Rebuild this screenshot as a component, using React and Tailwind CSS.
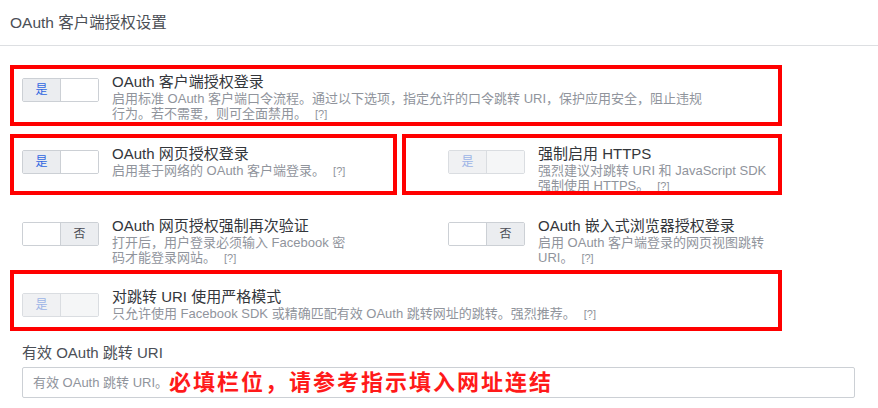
import React from 'react';

const font = { fontFamily: '"Liberation Sans", "Noto Sans CJK SC", sans-serif' };

const Toggle = ({ on, disabled }) => {
    if (on) {
        return (
            <div className={`flex w-[77px] h-[24px] shrink-0 mt-[5px] rounded-[2px] border overflow-hidden ${disabled ? 'border-[#dadde1]' : 'border-[#ccd0d5]'}`}>
                <div className={`w-[38px] flex items-center justify-center text-[12px] border-r ${disabled ? 'bg-[#f0f1f3] text-[#9cb4e6] border-[#dadde1]' : 'bg-[#ebedf0] text-[#2f66e0] border-[#ccd0d5]'}`}>
                    是
                </div>
                <div className={`flex-1 ${disabled ? 'bg-[#f5f6f7]' : 'bg-white'}`} />
            </div>
        );
    }
    return (
        <div className="flex w-[77px] h-[24px] shrink-0 mt-[5px] rounded-[2px] border border-[#ccd0d5] overflow-hidden">
            <div className="w-[38px] bg-white border-r border-[#ccd0d5]" />
            <div className="flex-1 bg-[#ebedf0] flex items-center justify-center text-[12px] text-[#4b4f56]">
                否
            </div>
        </div>
    );
};

const Help = () => <span className="ml-[8px] text-[11px] text-[#90949c]">[?]</span>;

const Option = ({ on, disabled, title, lines }) => (
    <div className="flex gap-[13px]">
        <Toggle on={on} disabled={disabled} />
        <div>
            <div className="text-[15px] leading-[18px] text-[#33363b] whitespace-nowrap">{title}</div>
            {lines.map((line, i) => (
                <div key={i} className="text-[13px] leading-[15px] text-[#90949c] whitespace-nowrap">
                    {line}
                    {i === lines.length - 1 && <Help />}
                </div>
            ))}
        </div>
    </div>
);

// red highlight frames drawn over the form
const Mark = ({ className }) => (
    <div className={`absolute border-[4px] border-[#ff0000] pointer-events-none ${className}`} />
);

export default function App() {
    return (
        <div className="relative w-[878px] h-[408px] bg-white overflow-hidden" style={font}>
            <div className="h-[46px] border-b border-[#dddfe2] px-[10px] flex items-center">
                <span className="text-[15.5px] text-[#4b4f56]">OAuth 客户端授权设置</span>
            </div>

            <div className="pl-[22px] pt-[27px]">
                <Option
                    on
                    title="OAuth 客户端授权登录"
                    lines={[
                        '启用标准 OAuth 客户端口令流程。通过以下选项，指定允许的口令跳转 URI，保护应用安全，阻止违规',
                        '行为。若不需要，则可全面禁用。',
                    ]}
                />

                <div className="grid grid-cols-[426px_1fr] mt-[23px]">
                    <Option on title="OAuth 网页授权登录" lines={['启用基于网络的 OAuth 客户端登录。']} />
                    <Option
                        on
                        disabled
                        title="强制启用 HTTPS"
                        lines={['强烈建议对跳转 URI 和 JavaScript SDK', '强制使用 HTTPS。']}
                    />
                </div>

                <div className="grid grid-cols-[426px_1fr] mt-[23px]">
                    <Option
                        title="OAuth 网页授权强制再次验证"
                        lines={['打开后，用户登录必须输入 Facebook 密', '码才能登录网站。']}
                    />
                    <Option
                        title="OAuth 嵌入式浏览器授权登录"
                        lines={['启用 OAuth 客户端登录的网页视图跳转', 'URI。']}
                    />
                </div>

                <div className="mt-[22px]">
                    <Option
                        on
                        disabled
                        title="对跳转 URI 使用严格模式"
                        lines={['只允许使用 Facebook SDK 或精确匹配有效 OAuth 跳转网址的跳转。强烈推荐。']}
                    />
                </div>

                <div className="mt-[22px] text-[15px] leading-[18px] text-[#4b4f56]">有效 OAuth 跳转 URI</div>
                <div className="mt-[5px] w-[833px] h-[31px] border border-[#ccd0d5] rounded-[2px] flex items-center px-[10px]">
                    <span className="text-[13px] text-[#90949c]">有效 OAuth 跳转 URI。</span>
                    <span className="ml-[1px] text-[22px] leading-[26px] font-bold text-[#ff1a1a] tracking-[2px]">
                        必填栏位，请参考指示填入网址连结
                    </span>
                </div>
            </div>

            <Mark className="left-[10px] top-[65px] w-[772px] h-[61px]" />
            <Mark className="left-[10px] top-[134px] w-[387px] h-[61px]" />
            <Mark className="left-[402px] top-[134px] w-[380px] h-[61px]" />
            <Mark className="left-[10px] top-[270px] w-[772px] h-[61px]" />
        </div>
    );
}
